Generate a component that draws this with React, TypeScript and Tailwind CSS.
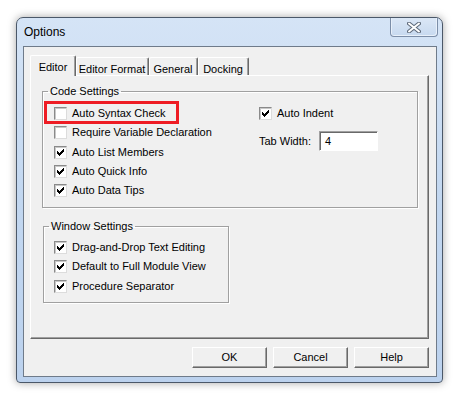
import type { ReactNode } from 'react';

// classic 3d check glyph, pixel columns [x, yStart]
const checkCols: [number, number][] = [
  [3, 5],
  [4, 6],
  [5, 7],
  [6, 6],
  [7, 5],
  [8, 4],
  [9, 3],
];

function CheckBox({ checked }: { checked?: boolean }) {
  return (
    <span className="flex h-[13px] w-[13px] flex-shrink-0 border border-t-[#8a8a8a] border-l-[#8a8a8a] border-r-[#dcdcdc] border-b-[#dcdcdc] bg-white shadow-[inset_1px_1px_0_#c8c8c8]">
      {checked && (
        <svg width="11" height="11" viewBox="1 1 11 11" shapeRendering="crispEdges">
          {checkCols.map(([x, y]) => (
            <rect key={x} x={x} y={y} width="1" height="3" fill="#000" />
          ))}
        </svg>
      )}
    </span>
  );
}

function CheckRow({ label, checked, children }: { label: string; checked?: boolean; children?: ReactNode }) {
  return (
    <div className="relative flex h-[19.25px] items-center gap-[5px]">
      <CheckBox checked={checked} />
      <span className="leading-none">{label}</span>
      {children}
    </div>
  );
}

function Group({ title, className, children }: { title: string; className?: string; children: ReactNode }) {
  return (
    <fieldset className={`border border-[#a0a0a0] shadow-[inset_1px_1px_0_#fff,1px_1px_0_#fff] ${className ?? ''}`}>
      <legend className="ml-[5px] px-[2px] leading-[14px]">{title}</legend>
      {children}
    </fieldset>
  );
}

function Tab({ label, active, width }: { label: string; active?: boolean; width: string }) {
  if (active) {
    return (
      <div
        className={`relative z-10 -mb-px flex h-[21px] items-start justify-center rounded-t-[2px] border-t border-l border-r border-t-white border-l-white border-r-[#696969] bg-[#f0f0f0] pt-[3px] shadow-[inset_-1px_0_0_#a0a0a0] ${width}`}
      >
        {label}
      </div>
    );
  }
  return (
    <div
      className={`flex h-[18px] items-start justify-center rounded-t-[2px] border-t border-r border-t-white border-r-[#696969] bg-[#f0f0f0] pt-[3px] shadow-[inset_-1px_0_0_#a0a0a0,inset_1px_0_0_#fff] ${width}`}
    >
      {label}
    </div>
  );
}

function Button({ label }: { label: string }) {
  return (
    <button className="flex h-[21px] w-[75px] items-center justify-center border border-t-white border-l-white border-r-[#696969] border-b-[#696969] bg-[#f0f0f0] shadow-[inset_-1px_-1px_0_#a0a0a0]">
      {label}
    </button>
  );
}

export default function App() {
  return (
    <div className="h-[397px] w-[460px] bg-white pl-[16px] pt-[17px] font-['Liberation_Sans',Arial,sans-serif] text-[11px] text-black">
      <div className="flex h-[366px] w-[427px] flex-col rounded-t-[7px] rounded-b-[4px] border border-[#4b5869] bg-gradient-to-b from-[#d5e4f6] via-[#c2d7f0] to-[#bcd2ee] shadow-[0_0_8px_rgba(0,0,0,0.35)]">
        {/* Title bar */}
        <div className="flex h-[28px] flex-shrink-0 items-start justify-between">
          <span className="pl-[7px] pt-[7px] text-[12px] leading-[14px]">Options</span>
          <div className="mr-[4px] flex h-[19px] w-[48px] items-center justify-center rounded-b-[4px] border border-t-0 border-[#7c8ea8] bg-gradient-to-b from-[#dbe7f6] to-[#c7d9ef] shadow-[inset_1px_0_0_#e8f0fa,inset_-1px_-1px_0_#e8f0fa]">
            <svg width="14" height="11" viewBox="0 0 14 11">
              <path d="M2 1.5 L12 9.5 M12 1.5 L2 9.5" stroke="#5f6b7b" strokeWidth="4" strokeLinecap="round" fill="none" />
              <path d="M2 1.5 L12 9.5 M12 1.5 L2 9.5" stroke="#fff" strokeWidth="2" strokeLinecap="round" fill="none" />
            </svg>
          </div>
        </div>

        {/* Client area */}
        <div className="ml-[6px] mr-[5px] flex h-[331px] flex-col border border-[#6f7b8a] bg-[#f0f0f0] pl-[6px] pr-[7px] pt-[8px]">
          {/* Tabs */}
          <div className="flex h-[20px] items-end">
            <Tab label="Editor" active width="w-[46px]" />
            <Tab label="Editor Format" width="w-[73px]" />
            <Tab label="General" width="w-[49px]" />
            <Tab label="Docking" width="w-[51px]" />
          </div>

          {/* Tab panel */}
          <div className="flex h-[264px] flex-col border border-t-white border-l-white border-r-[#696969] border-b-[#696969] pl-[11px] pr-[10px] pt-[8px] shadow-[inset_-1px_-1px_0_#a0a0a0]">
            <Group title="Code Settings" className="h-[124px]">
              <div className="flex pl-[11px] pt-[6px]">
                <div className="w-[205px]">
                  <CheckRow label="Auto Syntax Check">
                    <span className="absolute left-[-10px] top-[-3px] h-[23px] w-[135px] border-[3px] border-[#ee1c24]" />
                  </CheckRow>
                  <CheckRow label="Require Variable Declaration" />
                  <CheckRow label="Auto List Members" checked />
                  <CheckRow label="Auto Quick Info" checked />
                  <CheckRow label="Auto Data Tips" checked />
                </div>
                <div className="flex flex-col">
                  <CheckRow label="Auto Indent" checked />
                  <div className="mt-[8px] flex items-center">
                    <span className="w-[60px]">Tab Width:</span>
                    <div className="flex h-[20px] w-[59px] items-center border border-t-[#a0a0a0] border-l-[#a0a0a0] border-r-white border-b-white bg-white pl-[5px] shadow-[inset_1px_1px_0_#696969]">
                      4
                    </div>
                  </div>
                </div>
              </div>
            </Group>

            <Group title="Window Settings" className="ml-px mt-[11px] h-[84px] w-[186px]">
              <div className="pl-[10px] pt-[5px]">
                <CheckRow label="Drag-and-Drop Text Editing" checked />
                <CheckRow label="Default to Full Module View" checked />
                <CheckRow label="Procedure Separator" checked />
              </div>
            </Group>
          </div>

          {/* Buttons */}
          <div className="mt-[8px] flex justify-end gap-[6px]">
            <Button label="OK" />
            <Button label="Cancel" />
            <Button label="Help" />
          </div>
        </div>
      </div>
    </div>
  );
}
